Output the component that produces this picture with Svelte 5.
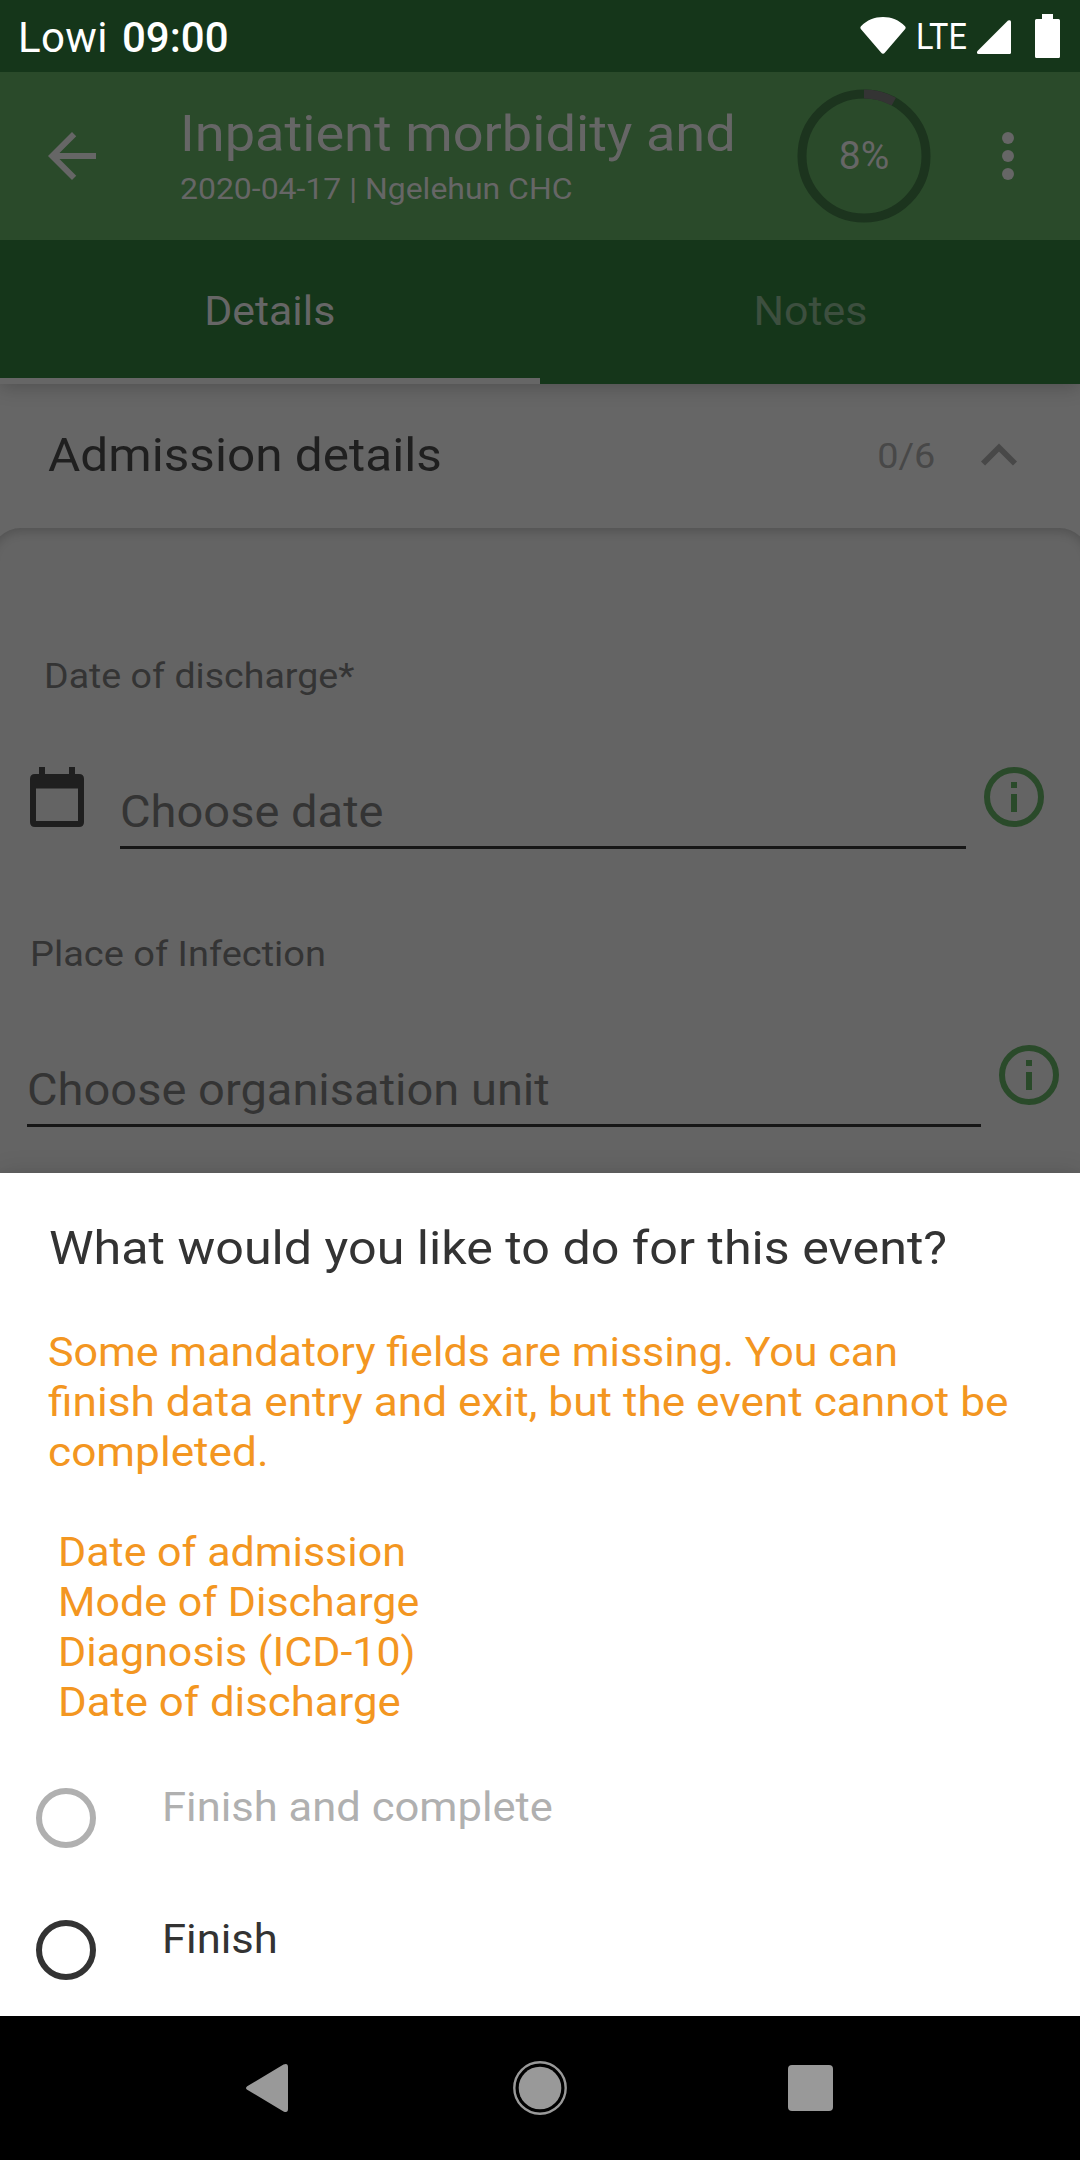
<script>
  const missing = [
    'Date of admission',
    'Mode of Discharge',
    'Diagnosis (ICD-10)',
    'Date of discharge'
  ];
  const options = [
    { label: 'Finish and complete', disabled: true },
    { label: 'Finish', disabled: false }
  ];
  const progress = 8;
</script>

{#snippet info()}
  <svg class="info" width="60" height="60" viewBox="0 0 60 60">
    <circle cx="30" cy="30" r="27" fill="none" stroke="currentColor" stroke-width="6" />
    <path d="M27 15h6v6h-6zM27 27h6v18h-6z" fill="currentColor" />
  </svg>
{/snippet}

<div class="screen">
  <div class="status">
    <span class="carrier">Lowi</span>
    <span class="clock">09:00</span>
    <div class="status-icons">
      <svg class="wifi" width="46" height="37" viewBox="0 0 46 37">
        <path d="M1 9.2C7 3 14.500 0 23 0s16 3 22 9.200q1.200 1.300.2 2.700L25 35.600q-2 2.400-4 0L.8 11.900q-1-1.400.2-2.700z" fill="#fff" />
      </svg>
      <span class="lte">LTE</span>
      <svg class="signal" width="34" height="34" viewBox="0 0 34 34">
        <path d="M31 .6q3-1.400 3 1.400v30.500q0 1.500-1.500 1.500H1.500q-2.500-.5-1-3z" fill="#fff" />
      </svg>
      <svg width="25" height="44" viewBox="0 0 25 44">
        <path d="M7 0h11v5h5.500q1.500 0 1.500 1.500v36q0 1.500-1.500 1.500h-22Q0 44 0 42.500v-36Q0 5 1.500 5H7z" fill="#fff" />
      </svg>
    </div>
  </div>

  <header class="appbar">
    <svg class="back" width="48" height="48" viewBox="4 4 16 16">
      <path d="M20 11H7.830l5.590-5.590L12 4l-8 8 8 8 1.410-1.410L7.830 13H20v-2z" fill="#666" />
    </svg>
    <div class="titles">
      <div class="title">Inpatient morbidity and</div>
      <div class="subtitle">2020-04-17 | Ngelehun CHC</div>
    </div>
    <div class="ring">
      <svg width="134" height="134" viewBox="-67 -67 134 134">
        <circle r="62" fill="none" stroke="#1c341e" stroke-width="9" />
        <circle r="62" fill="none" stroke="#343434" stroke-width="9" pathLength="100" stroke-dasharray="{progress} 100" transform="rotate(-90)" />
      </svg>
      <span class="percent">{progress}%</span>
    </div>
    <svg class="more" width="12" height="48" viewBox="0 0 12 48">
      <circle cx="6" cy="6" r="6" fill="#666" />
      <circle cx="6" cy="24" r="6" fill="#666" />
      <circle cx="6" cy="42" r="6" fill="#666" />
    </svg>
  </header>

  <nav class="tabs">
    <div class="tab active"><span>Details</span></div>
    <div class="tab"><span>Notes</span></div>
  </nav>

  <main class="form">
    <div class="section">
      <span class="section-title">Admission details</span>
      <span class="count">0/6</span>
      <svg class="chevron" width="36" height="23" viewBox="0 0 36 23">
        <path d="M2 20.500 18 4.500l16 16" fill="none" stroke="#484848" stroke-width="5.800" />
      </svg>
    </div>
    <div class="card">
      <div class="label mandatory">Date of discharge*</div>
      <div class="field dated">
        <svg class="calendar" width="54" height="60" viewBox="0 0 54 60">
          <path d="M9 0h6v7h24V0h6v7h4q5 0 5 5v43q0 5-5 5H5q-5 0-5-5V12q0-5 5-5h4zM6 21.500V54h42V21.500z" fill="#1f1f1f" fill-rule="evenodd" />
        </svg>
        <div class="input"><span>Choose date</span></div>
        {@render info()}
      </div>
      <div class="label place">Place of Infection</div>
      <div class="field">
        <div class="input"><span>Choose organisation unit</span></div>
        {@render info()}
      </div>
    </div>
  </main>

  <section class="sheet">
    <h1>What would you like to do for this event?</h1>
    <p class="message">
      <span>Some mandatory fields are missing. You can</span>
      <span>finish data entry and exit, but the event cannot be</span>
      <span>completed.</span>
    </p>
    <ul class="missing">
      {#each missing as name}
        <li>{name}</li>
      {/each}
    </ul>
    {#each options as option}
      <div class="option" class:disabled={option.disabled}>
        <span class="radio"></span>
        <span class="option-label">{option.label}</span>
      </div>
    {/each}
  </section>

  <footer class="navbar">
    <svg class="nav-back" width="42" height="48" viewBox="0 0 42 48">
      <path d="M1.200 22.200 37.500.6Q42-1.200 42 3v42q0 4.200-4.500 2.400L1.200 25.800q-2.400-1.800 0-3.600z" fill="#999" />
    </svg>
    <svg class="nav-home" width="54" height="54" viewBox="-27 -27 54 54">
      <circle r="25.700" fill="none" stroke="#999" stroke-width="2.400" />
      <circle r="21.300" fill="#999" />
    </svg>
    <svg class="nav-recent" width="45" height="46" viewBox="0 0 45 46">
      <rect width="45" height="46" rx="4" fill="#999" />
    </svg>
  </footer>
</div>

<style>
  :global(body) {
    margin: 0;
    background: #000;
  }
  .screen {
    width: 1080px;
    height: 2160px;
    display: flex;
    flex-direction: column;
    overflow: hidden;
    font-family: Roboto, 'Liberation Sans', sans-serif;
    white-space: nowrap;
  }
  .status {
    flex: none;
    height: 72px;
    box-sizing: border-box;
    padding: 3px 20px 0 18px;
    display: flex;
    align-items: center;
    background: #15361a;
    color: #fff;
    font-size: 42px;
  }
  .carrier {
    letter-spacing: 0.4px;
  }
  .clock {
    margin-left: 14px;
    font-weight: 500;
  }
  .status-icons {
    margin-left: auto;
    display: flex;
    align-items: center;
    padding-bottom: 3px;
  }
  .wifi {
    margin: -2px 10px 0 0;
  }
  .lte {
    width: 50px;
    margin-right: 11px;
    font-size: 37.5px;
    transform: scaleX(0.865);
    transform-origin: left;
  }
  .signal {
    margin: 2px 24px 0 0;
  }

  .appbar {
    position: relative;
    z-index: 1;
    flex: none;
    height: 168px;
    display: flex;
    align-items: center;
    background: #2a4a2a;
    color: #666;
  }
  .back {
    margin: 0 84px 0 48px;
  }
  .titles {
    width: 617px;
    padding-bottom: 1px;
  }
  .title {
    font-size: 50px;
    line-height: 60px;
    margin-bottom: 7px;
    transform: scaleX(1.083);
    transform-origin: left;
  }
  .subtitle {
    font-size: 29.5px;
    line-height: 36px;
    transform: scaleX(1.083);
    transform-origin: left;
  }
  .ring {
    width: 134px;
    height: 134px;
    display: grid;
    place-items: center;
  }
  .ring > * {
    grid-area: 1 / 1;
  }
  .percent {
    font-size: 39px;
    line-height: 46px;
  }
  .more {
    margin-left: 71px;
  }

  .tabs {
    flex: none;
    height: 144px;
    display: grid;
    grid-template-columns: 1fr 1fr;
    background: #15361a;
    position: relative;
    box-shadow: 0 3px 18px rgba(0, 0, 0, 0.22);
  }
  .tab {
    box-sizing: border-box;
    height: 144px;
    border-bottom: 6px solid transparent;
    line-height: 142px;
    text-align: center;
    font-size: 41px;
    color: #3d4f3f;
  }
  .tab span {
    display: inline-block;
    transform: scaleX(1.045);
  }
  .active {
    color: #666;
    border-color: #666;
  }

  .form {
    flex: none;
    height: 789px;
    background: #666;
    overflow: hidden;
  }
  .section {
    height: 144px;
    display: flex;
    align-items: center;
    padding: 0 63px 0 48px;
    color: #484848;
  }
  .section-title {
    margin: -4px auto 0 0;
    font-size: 47px;
    color: #1f1f1f;
    transform: scaleX(1.054);
    transform-origin: left;
  }
  .count {
    margin: -1px 47px 0 0;
    font-size: 35.5px;
    transform: scaleX(1.066);
  }
  .chevron {
    margin-top: -3px;
  }
  .card {
    height: 645px;
    box-sizing: border-box;
    margin: 0 -9px;
    padding: 127px 9px 0;
    border-radius: 30px 30px 0 0;
    background: #646464;
    box-shadow: inset 0 4px 10px rgba(0, 0, 0, 0.17);
    color: #343434;
  }
  .label {
    font-size: 35.5px;
    line-height: 42px;
    margin-bottom: 70px;
  }
  .mandatory {
    padding-left: 43px;
    transform: scaleX(1.058);
    transform-origin: 43px 50%;
    margin-left: 1px;
  }
  .place {
    padding-left: 29px;
    transform: scaleX(1.07);
    transform-origin: 29px 50%;
    margin-left: 1px;
  }
  .field {
    display: flex;
    align-items: flex-start;
    gap: 18px;
    padding: 0 21px 0 27px;
    height: 82px;
  }
  .dated {
    padding: 0 36px 0 30px;
    margin-bottom: 84px;
  }
  .calendar {
    margin-right: 18px;
  }
  .input {
    flex: 1;
    box-sizing: border-box;
    height: 82px;
    padding-top: 18px;
    border-bottom: 3px solid #161616;
    font-size: 44px;
    line-height: 54px;
  }
  .input span {
    display: inline-block;
    transform: scaleX(1.069);
    transform-origin: left;
  }
  .info {
    color: #2a4a2a;
  }

  .sheet {
    flex: none;
    height: 843px;
    box-sizing: border-box;
    padding-top: 45px;
    background: #fff;
    position: relative;
    box-shadow: 0 0 24px rgba(0, 0, 0, 0.12);
    overflow: hidden;
  }
  h1 {
    width: max-content;
    margin: 0 0 49px 49px;
    font-size: 47px;
    font-weight: 400;
    line-height: 60px;
    color: #333;
    transform: scaleX(1.069);
    transform-origin: left;
  }
  .message {
    margin: 0 0 50px 48px;
    color: #f39621;
    font-size: 41px;
    line-height: 50px;
  }
  .message span {
    display: block;
    width: max-content;
    transform: scaleX(1.078);
    transform-origin: left;
  }
  .message span:first-child {
    transform: scaleX(1.05);
  }
  .missing {
    list-style: none;
    margin: 0 0 55px;
    padding: 0 0 0 58px;
    color: #f39621;
    font-size: 41px;
    line-height: 50px;
  }
  .missing li {
    width: max-content;
    transform: scaleX(1.048);
    transform-origin: left;
  }
  .missing li:last-child {
    transform: scaleX(1.067);
  }
  .option {
    display: flex;
    height: 132px;
    color: #333;
    padding-left: 36px;
  }
  .disabled {
    color: #b0b0b0;
  }
  .radio {
    width: 60px;
    height: 60px;
    box-sizing: border-box;
    margin: 6px 66px 0 0;
    border: 6px solid currentColor;
    border-radius: 50%;
  }
  .option-label {
    font-size: 41px;
    line-height: 50px;
    transform: scaleX(1.062);
    transform-origin: left;
    align-self: flex-start;
  }

  .navbar {
    position: relative;
    flex: none;
    height: 144px;
    display: flex;
    align-items: center;
    background: #000;
  }
  .nav-back {
    margin-left: 246px;
  }
  .nav-home {
    margin-left: 225px;
  }
  .nav-recent {
    margin-left: 221px;
  }
</style>
